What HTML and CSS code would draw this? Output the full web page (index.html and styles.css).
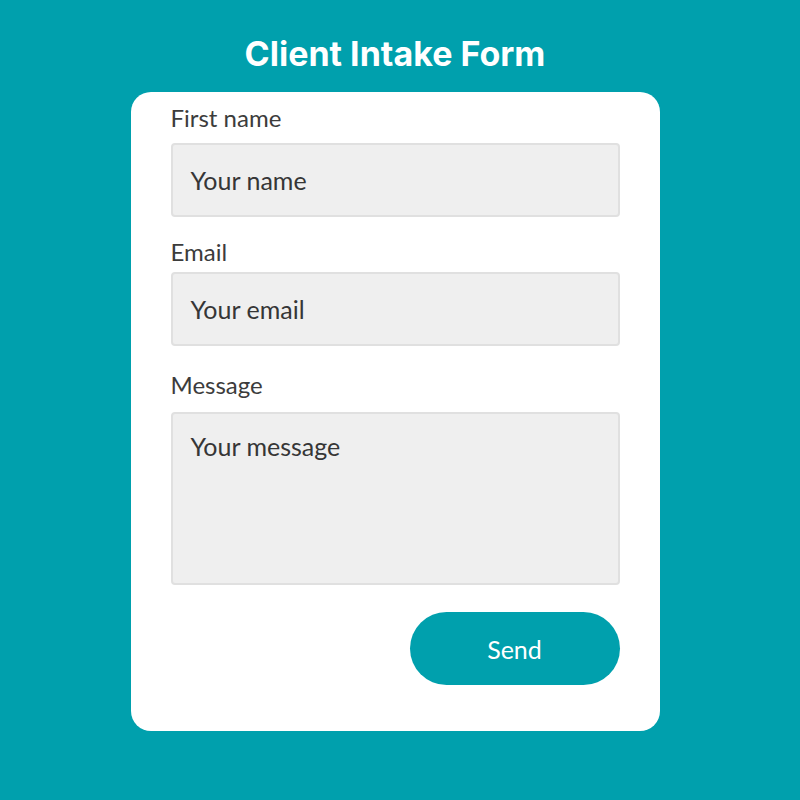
FILE: index.html
```html
<!DOCTYPE html>
<html lang="en">
<head>
<meta charset="utf-8">
<title>Client Intake Form</title>
<link rel="stylesheet" href="styles.css">
</head>
<body>
<main class="page">
  <h1 class="title">Client Intake Form</h1>
  <form class="card">
    <div class="field field-name">
      <label class="label" for="name">First name</label>
      <div class="input" id="name">Your name</div>
    </div>
    <div class="field field-email">
      <label class="label" for="email">Email</label>
      <div class="input" id="email">Your email</div>
    </div>
    <div class="field field-message">
      <label class="label" for="message">Message</label>
      <div class="input textarea" id="message">Your message</div>
    </div>
    <div class="actions">
      <button type="button" class="send">Send</button>
    </div>
  </form>
</main>
</body>
</html>
```

FILE: styles.css
```css
* { box-sizing: border-box; }
html, body {
  margin: 0;
  padding: 0;
  width: 800px;
  height: 800px;
  background: #00a0ad;
  font-family: "Lato", "Open Sans", sans-serif;
}
.page {
  display: flex;
  flex-direction: column;
  align-items: center;
  padding: 32px 10px 0 0;
}
.title {
  margin: 0;
  font-family: "Inter", sans-serif;
  font-weight: 700;
  font-size: 34px;
  line-height: 44px;
  color: #ffffff;
}
.card {
  margin-top: 16px;
  width: 529px;
  height: 639px;
  background: #ffffff;
  border-radius: 20px;
  padding: 12px 40px 0 40px;
  display: flex;
  flex-direction: column;
}
.label {
  display: block;
  font-size: 24px;
  line-height: 28px;
  color: #3c3c3c;
}
.input {
  margin-top: 11px;
  height: 74px;
  background: #efefef;
  border: 2px solid #e0e0e0;
  border-radius: 4px;
  padding: 0 18px;
  display: flex;
  align-items: center;
  font-size: 25px;
  line-height: 28px;
  color: #363636;
}
.field-email { margin-top: 21px; }
.field-message { margin-top: 25px; }
.field-email .input { margin-top: 6px; }
.field-message .input { margin-top: 13px; }
.textarea {
  height: 173px;
  align-items: flex-start;
  padding-top: 18px;
}
.actions {
  margin-top: 27px;
  display: flex;
  justify-content: flex-end;
}
.send {
  width: 210px;
  height: 73px;
  border: 0;
  border-radius: 37px;
  background: #00a0ad;
  color: #ffffff;
  font-family: "Lato", "Open Sans", sans-serif;
  font-size: 25px;
}
```
